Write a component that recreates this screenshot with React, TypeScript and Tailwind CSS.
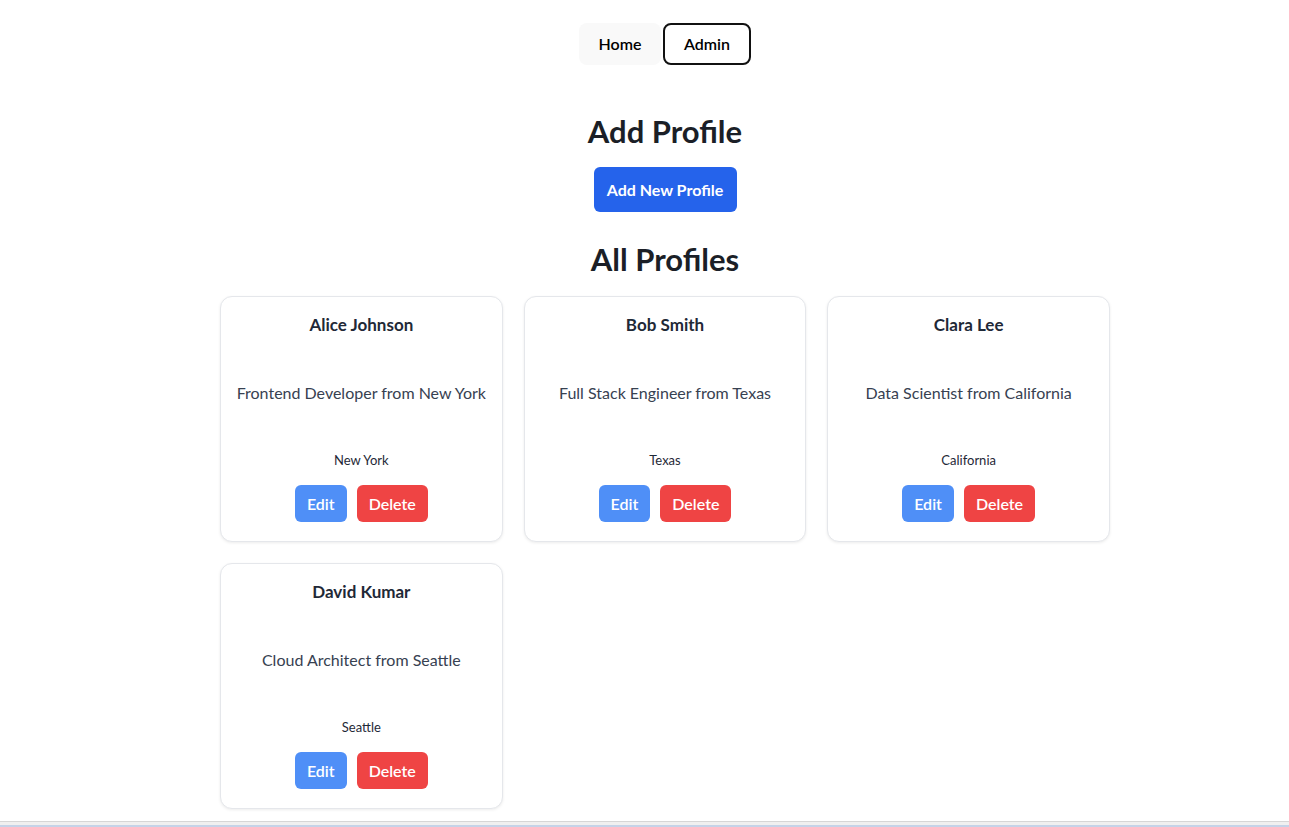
import React from "react"

type Profile = {
  id: number
  name: string
  description: string
  location: string
}

const profiles: Profile[] = [
  { id: 1, name: "Alice Johnson", description: "Frontend Developer from New York", location: "New York" },
  { id: 2, name: "Bob Smith", description: "Full Stack Engineer from Texas", location: "Texas" },
  { id: 3, name: "Clara Lee", description: "Data Scientist from California", location: "California" },
  { id: 4, name: "David Kumar", description: "Cloud Architect from Seattle", location: "Seattle" },
]

function ProfileCard({ profile }: { profile: Profile }) {
  return (
    <div className="flex h-[246px] flex-col items-center rounded-xl border border-[#e5e7eb] bg-white px-2 pt-4 text-center shadow-[0_1px_3px_rgba(0,0,0,0.08)]">
      <h3 className="text-[17px] font-bold leading-6 text-[#1f2937]">{profile.name}</h3>
      <p className="mt-[44px] whitespace-nowrap text-[16px] leading-6 text-[#374151]">{profile.description}</p>
      <p className="mt-[45px] text-[13px] leading-5 text-[#1f2937]">{profile.location}</p>
      <div className="mt-[15px] flex gap-[10px]">
        <button className="h-[37px] rounded-md bg-[#4f8ff7] px-3 text-[16px] font-semibold text-white">
          Edit
        </button>
        <button className="h-[37px] rounded-md bg-[#ef4444] px-3 text-[16px] font-semibold text-white">
          Delete
        </button>
      </div>
    </div>
  )
}

export default function App() {
  return (
    <div className="flex h-screen flex-col overflow-hidden bg-white font-['Lato','Liberation_Sans',sans-serif]">
      <div className="flex-1 overflow-hidden pl-[41px]">
        <nav className="flex justify-center gap-[2px] pt-[23px]">
          <button className="h-[42px] w-[82px] rounded-lg bg-[#f9f9f9] text-[16px] font-semibold text-black">
            Home
          </button>
          <button className="h-[42px] w-[88px] rounded-lg border-2 border-[#111] bg-white text-[16px] font-semibold text-black">
            Admin
          </button>
        </nav>

        <h2 className="mt-[48px] text-center text-[31px] font-bold leading-[36px] text-[#1b1f27]">
          Add Profile
        </h2>
        <div className="mt-[18px] flex justify-center">
          <button className="h-[45px] w-[143px] rounded-md bg-[#2563eb] text-[16px] font-bold text-white">
            Add New Profile
          </button>
        </div>

        <h2 className="mt-[29px] text-center text-[31px] font-bold leading-[36px] text-[#1b1f27]">
          All Profiles
        </h2>

        <div className="mx-auto mt-[19px] grid w-[890px] grid-cols-3 gap-[21px]">
          {profiles.map((p) => (
            <ProfileCard key={p.id} profile={p} />
          ))}
        </div>
      </div>
      <div className="h-[6px] shrink-0 border-t border-[#d6d6d6] bg-[#f0f0f0] shadow-[inset_0_-2px_0_#c5d3e8]" />
    </div>
  )
}
